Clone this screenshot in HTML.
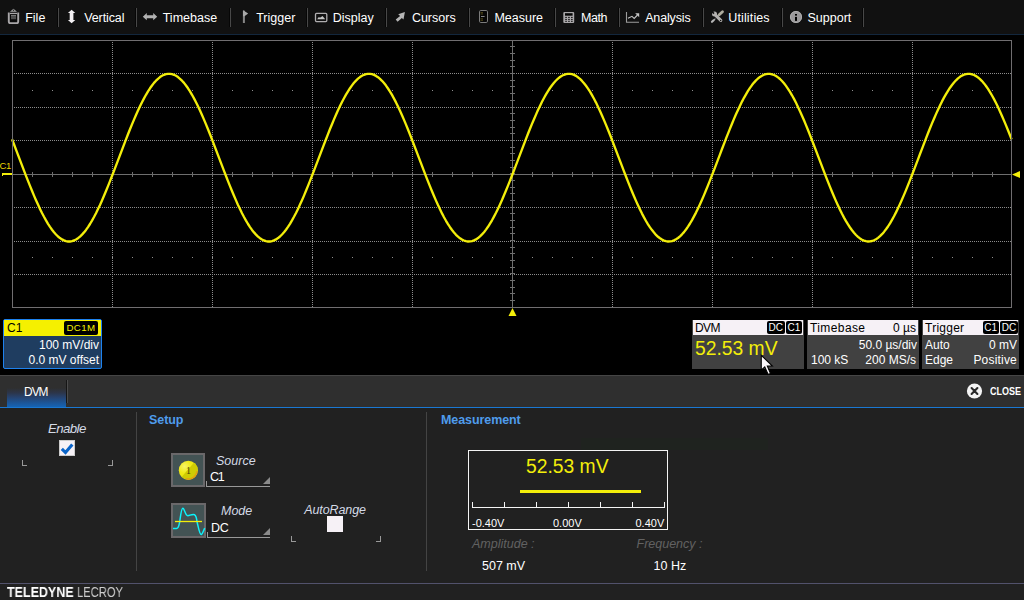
<!DOCTYPE html>
<html lang="en"><head><meta charset="utf-8"><title>DVM</title>
<style>
html,body{margin:0;padding:0}
body{width:1024px;height:600px;background:#000;position:relative;overflow:hidden;font-family:"Liberation Sans",sans-serif;color:#fff}
.t{position:absolute;white-space:nowrap;line-height:1}
.b{position:absolute}
.mi{font-size:12.5px;color:#fff}
.sep{position:absolute;top:8px;width:1px;height:19px;background:#484848}
.badge{position:absolute;background:#000;border-radius:2px;font-size:10px;text-align:center;line-height:13px;height:13px}
.it{font-style:italic}
.hd{font-weight:bold;color:#4f9cec;font-size:12.5px;letter-spacing:-0.080px}
</style></head><body>

<div class="b" style="left:0;top:0;width:1024px;height:34px;background:#111"></div>
<div class="b" style="left:0;top:34px;width:1024px;height:1px;background:#13273d"></div>
<div class="sep" style="left:57px;background:#060606"></div><div class="sep" style="left:58px"></div>
<div class="sep" style="left:135px;background:#060606"></div><div class="sep" style="left:136px"></div>
<div class="sep" style="left:229px;background:#060606"></div><div class="sep" style="left:230px"></div>
<div class="sep" style="left:306px;background:#060606"></div><div class="sep" style="left:307px"></div>
<div class="sep" style="left:385px;background:#060606"></div><div class="sep" style="left:386px"></div>
<div class="sep" style="left:468px;background:#060606"></div><div class="sep" style="left:469px"></div>
<div class="sep" style="left:554px;background:#060606"></div><div class="sep" style="left:555px"></div>
<div class="sep" style="left:618px;background:#060606"></div><div class="sep" style="left:619px"></div>
<div class="sep" style="left:702px;background:#060606"></div><div class="sep" style="left:703px"></div>
<div class="sep" style="left:781px;background:#060606"></div><div class="sep" style="left:782px"></div>
<div class="sep" style="left:862px;background:#060606"></div><div class="sep" style="left:863px"></div>
<span class="t mi" style="left:25.2px;top:11.5px;letter-spacing:0px">File</span>
<span class="t mi" style="left:84.2px;top:11.5px;letter-spacing:-0.1px">Vertical</span>
<span class="t mi" style="left:162.7px;top:11.5px;letter-spacing:0px">Timebase</span>
<span class="t mi" style="left:256.2px;top:11.5px;letter-spacing:0px">Trigger</span>
<span class="t mi" style="left:332.7px;top:11.5px;letter-spacing:0px">Display</span>
<span class="t mi" style="left:411.9px;top:11.5px;letter-spacing:0px">Cursors</span>
<span class="t mi" style="left:494.4px;top:11.5px;letter-spacing:0px">Measure</span>
<span class="t mi" style="left:581.0px;top:11.5px;letter-spacing:-0.45px">Math</span>
<span class="t mi" style="left:645.2px;top:11.5px;letter-spacing:-0.15px">Analysis</span>
<span class="t mi" style="left:728.3px;top:11.5px;letter-spacing:0.13px">Utilities</span>
<span class="t mi" style="left:807.5px;top:11.5px;letter-spacing:0px">Support</span>
<svg class="b" style="left:0;top:0" width="1024" height="34" viewBox="0 0 1024 34"><path d="M9.900 11.800L13.500 8.800L17 11.800z" fill="#a4a4a4"/><circle cx="13.500" cy="10.300" r="0.700" fill="#222"/><path d="M8.800 12.500V21.500Q8.800 23.100 10.400 23.100H16.600Q18.200 23.100 18.200 21.500V12.500" fill="#0a0a0a" stroke="#a8a6a8" stroke-width="1.900"/><rect x="10" y="12.800" width="7" height="1.300" fill="#a8a6a8"/><rect x="11" y="15" width="5" height="4.200" fill="#4c4c4c"/><rect x="11" y="15" width="5" height="0.900" fill="#7a7a7a"/><path d="M71.600 9.700L75.300 13.100H73.400V19.900H75.300L71.600 23.300L67.900 19.900H69.700V13.100H67.900z" fill="#f4f1f4"/><path d="M142.800 16.700L146.800 13V15.300H153.200V13L157.200 16.700L153.200 20.300V18.200H146.800V20.300z" fill="#b2b2b2"/><rect x="242.900" y="10.600" width="2" height="12.400" fill="#868686"/><path d="M243 10.300L248.200 13.400L244.500 16.200H243z" fill="#a8a8a8"/><rect x="315.500" y="13.400" width="11.300" height="8.200" rx="1" fill="none" stroke="#b0aeb0" stroke-width="1.300"/><path d="M317.200 19.300L318.500 17.300L320.300 17.600L322.500 16L324 17.800L325.200 19.300z" fill="#c4c4c4"/><path d="M404.900 12L398.200 14.300L400.100 16L395.700 19.600L397.600 21.800L401.900 17.900L403.500 19.400z" fill="#b6b6b6"/><rect x="479.500" y="10.500" width="8" height="12" rx="1.300" fill="#050505" stroke="#7c7c7c" stroke-width="1"/><path d="M480.500 12.600h2.500M480.500 14h2.500M480.500 18.800h2.500M480.500 20.300h2.500" stroke="#6a6020" stroke-width="0.700"/><path d="M481 16.500h3.600" stroke="#a8a8a8" stroke-width="0.800"/><rect x="563.300" y="12" width="10.900" height="11" rx="1" fill="#a9a7a9"/><rect x="565" y="13.200" width="7.600" height="2.500" fill="#050505"/><rect x="565.2" y="16.9" width="1.700" height="1" fill="#111"/><rect x="565.2" y="18.9" width="1.700" height="1" fill="#111"/><rect x="565.2" y="20.8" width="1.700" height="1" fill="#111"/><rect x="568.1" y="16.9" width="1.700" height="1" fill="#111"/><rect x="568.1" y="18.9" width="1.700" height="1" fill="#111"/><rect x="568.1" y="20.8" width="1.700" height="1" fill="#111"/><rect x="571" y="16.9" width="1.700" height="1" fill="#111"/><rect x="571" y="18.9" width="1.700" height="1" fill="#111"/><rect x="571" y="20.8" width="1.700" height="1" fill="#111"/><path d="M626.500 12V22.300H639" fill="none" stroke="#9c9c9c" stroke-width="1.100"/><path d="M628 18.300L632 16.300L634.200 18.400L637.500 15" fill="none" stroke="#c4c4c4" stroke-width="1.100"/><path d="M635.200 13.300H639.200V17.300z" fill="#c4c4c4"/><path d="M722.500 11.700L719.200 14.800" stroke="#aeac9e" stroke-width="2.800" stroke-linecap="round"/><path d="M715.400 18.700L713.400 20.600" stroke="#b0b0b0" stroke-width="1.100"/><path d="M713.600 20.300L712 21.800" stroke="#b6b6b6" stroke-width="2.200" stroke-linecap="round"/><path d="M716 15.600L720.800 20.400" stroke="#b4b2b0" stroke-width="3.100" stroke-linecap="round"/><circle cx="714.500" cy="14.100" r="2.500" fill="#b4b2b0"/><path d="M714 13.600L711 10.600" stroke="#111" stroke-width="1.600"/><circle cx="720.600" cy="20.400" r="0.750" fill="#111"/><circle cx="796" cy="17" r="6" fill="#9a989a"/><circle cx="796" cy="17" r="5.600" fill="none" stroke="#b4b4b4" stroke-width="0.800"/><rect x="795" y="14" width="2" height="1.600" fill="#000"/><rect x="795" y="16.900" width="2" height="4" fill="#000"/></svg>
<svg class="b" style="left:0;top:35px" width="1024" height="290" viewBox="0 35 1024 290">
<line x1="14" x2="1011" y1="73.5" y2="73.5" stroke="#8c8c8c" stroke-width="1" stroke-dasharray="1 1" shape-rendering="crispEdges"/>
<line x1="14" x2="1011" y1="107.5" y2="107.5" stroke="#8c8c8c" stroke-width="1" stroke-dasharray="1 1" shape-rendering="crispEdges"/>
<line x1="14" x2="1011" y1="140.5" y2="140.5" stroke="#8c8c8c" stroke-width="1" stroke-dasharray="1 1" shape-rendering="crispEdges"/>
<line x1="14" x2="1011" y1="207.5" y2="207.5" stroke="#8c8c8c" stroke-width="1" stroke-dasharray="1 1" shape-rendering="crispEdges"/>
<line x1="14" x2="1011" y1="241.5" y2="241.5" stroke="#8c8c8c" stroke-width="1" stroke-dasharray="1 1" shape-rendering="crispEdges"/>
<line x1="14" x2="1011" y1="274.5" y2="274.5" stroke="#8c8c8c" stroke-width="1" stroke-dasharray="1 1" shape-rendering="crispEdges"/>
<line y1="42" y2="307" x1="112.5" x2="112.5" stroke="#8c8c8c" stroke-width="1" stroke-dasharray="1 1" shape-rendering="crispEdges"/>
<line y1="42" y2="307" x1="212.5" x2="212.5" stroke="#8c8c8c" stroke-width="1" stroke-dasharray="1 1" shape-rendering="crispEdges"/>
<line y1="42" y2="307" x1="312.5" x2="312.5" stroke="#8c8c8c" stroke-width="1" stroke-dasharray="1 1" shape-rendering="crispEdges"/>
<line y1="42" y2="307" x1="412.5" x2="412.5" stroke="#8c8c8c" stroke-width="1" stroke-dasharray="1 1" shape-rendering="crispEdges"/>
<line y1="42" y2="307" x1="612.5" x2="612.5" stroke="#8c8c8c" stroke-width="1" stroke-dasharray="1 1" shape-rendering="crispEdges"/>
<line y1="42" y2="307" x1="712.5" x2="712.5" stroke="#8c8c8c" stroke-width="1" stroke-dasharray="1 1" shape-rendering="crispEdges"/>
<line y1="42" y2="307" x1="812.5" x2="812.5" stroke="#8c8c8c" stroke-width="1" stroke-dasharray="1 1" shape-rendering="crispEdges"/>
<line y1="42" y2="307" x1="912.5" x2="912.5" stroke="#8c8c8c" stroke-width="1" stroke-dasharray="1 1" shape-rendering="crispEdges"/>
<path d="M32 90.5h1M52 90.5h1M72 90.5h1M92 90.5h1M112 90.5h1M132 90.5h1M152 90.5h1M172 90.5h1M192 90.5h1M212 90.5h1M232 90.5h1M252 90.5h1M272 90.5h1M292 90.5h1M312 90.5h1M332 90.5h1M352 90.5h1M372 90.5h1M392 90.5h1M412 90.5h1M432 90.5h1M452 90.5h1M472 90.5h1M492 90.5h1M512 90.5h1M532 90.5h1M552 90.5h1M572 90.5h1M592 90.5h1M612 90.5h1M632 90.5h1M652 90.5h1M672 90.5h1M692 90.5h1M712 90.5h1M732 90.5h1M752 90.5h1M772 90.5h1M792 90.5h1M812 90.5h1M832 90.5h1M852 90.5h1M872 90.5h1M892 90.5h1M912 90.5h1M932 90.5h1M952 90.5h1M972 90.5h1M992 90.5h1M32 257.5h1M52 257.5h1M72 257.5h1M92 257.5h1M112 257.5h1M132 257.5h1M152 257.5h1M172 257.5h1M192 257.5h1M212 257.5h1M232 257.5h1M252 257.5h1M272 257.5h1M292 257.5h1M312 257.5h1M332 257.5h1M352 257.5h1M372 257.5h1M392 257.5h1M412 257.5h1M432 257.5h1M452 257.5h1M472 257.5h1M492 257.5h1M512 257.5h1M532 257.5h1M552 257.5h1M572 257.5h1M592 257.5h1M612 257.5h1M632 257.5h1M652 257.5h1M672 257.5h1M692 257.5h1M712 257.5h1M732 257.5h1M752 257.5h1M772 257.5h1M792 257.5h1M812 257.5h1M832 257.5h1M852 257.5h1M872 257.5h1M892 257.5h1M912 257.5h1M932 257.5h1M952 257.5h1M972 257.5h1M992 257.5h1" stroke="#909090" stroke-width="1" shape-rendering="crispEdges"/>
<path d="M12 174.5H1012M512.5 40V308M32.5 172v5M52.5 172v5M72.5 172v5M92.5 172v5M112.5 172v5M132.5 172v5M152.5 172v5M172.5 172v5M192.5 172v5M212.5 172v5M232.5 172v5M252.5 172v5M272.5 172v5M292.5 172v5M312.5 172v5M332.5 172v5M352.5 172v5M372.5 172v5M392.5 172v5M412.5 172v5M432.5 172v5M452.5 172v5M472.5 172v5M492.5 172v5M512.5 172v5M532.5 172v5M552.5 172v5M572.5 172v5M592.5 172v5M612.5 172v5M632.5 172v5M652.5 172v5M672.5 172v5M692.5 172v5M712.5 172v5M732.5 172v5M752.5 172v5M772.5 172v5M792.5 172v5M812.5 172v5M832.5 172v5M852.5 172v5M872.5 172v5M892.5 172v5M912.5 172v5M932.5 172v5M952.5 172v5M972.5 172v5M992.5 172v5M510 46.5h5M510 53.5h5M510 60.5h5M510 66.5h5M510 73.5h5M510 80.5h5M510 86.5h5M510 93.5h5M510 100.5h5M510 107.5h5M510 113.5h5M510 120.5h5M510 127.5h5M510 133.5h5M510 140.5h5M510 147.5h5M510 153.5h5M510 160.5h5M510 167.5h5M510 173.5h5M510 180.5h5M510 187.5h5M510 193.5h5M510 200.5h5M510 207.5h5M510 213.5h5M510 220.5h5M510 227.5h5M510 233.5h5M510 240.5h5M510 247.5h5M510 253.5h5M510 260.5h5M510 267.5h5M510 273.5h5M510 280.5h5M510 287.5h5M510 293.5h5M510 300.5h5" stroke="#6e6e6e" stroke-width="1" fill="none" shape-rendering="crispEdges"/>
<polyline points="12,139.2 14,144.3 16,149.6 18,154.8 20,160.1 22,165.3 24,170.6 26,175.8 28,180.9 30,185.9 32,190.8 34,195.6 36,200.2 38,204.6 40,208.9 42,213.0 44,216.8 46,220.4 48,223.8 50,226.9 52,229.7 54,232.3 56,234.5 58,236.5 60,238.1 62,239.4 64,240.4 66,241.1 68,241.5 70,241.5 72,241.1 74,240.5 76,239.5 78,238.2 80,236.6 82,234.6 84,232.4 86,229.9 88,227.1 90,224.0 92,220.6 94,217.0 96,213.2 98,209.1 100,204.9 102,200.4 104,195.8 106,191.0 108,186.1 110,181.1 112,176.0 114,170.8 116,165.6 118,160.4 120,155.1 122,149.8 124,144.6 126,139.4 128,134.3 130,129.3 132,124.4 134,119.6 136,115.0 138,110.6 140,106.3 142,102.2 144,98.4 146,94.8 148,91.4 150,88.3 152,85.5 154,82.9 156,80.7 158,78.8 160,77.1 162,75.8 164,74.8 166,74.2 168,73.8 170,73.8 172,74.2 174,74.8 176,75.8 178,77.1 180,78.8 182,80.7 184,82.9 186,85.5 188,88.3 190,91.4 192,94.8 194,98.4 196,102.2 198,106.3 200,110.6 202,115.0 204,119.6 206,124.4 208,129.3 210,134.3 212,139.4 214,144.6 216,149.8 218,155.1 220,160.4 222,165.6 224,170.8 226,176.0 228,181.1 230,186.1 232,191.0 234,195.8 236,200.4 238,204.9 240,209.1 242,213.2 244,217.0 246,220.6 248,224.0 250,227.1 252,229.9 254,232.4 256,234.6 258,236.6 260,238.2 262,239.5 264,240.5 266,241.1 268,241.5 270,241.5 272,241.1 274,240.4 276,239.4 278,238.1 280,236.5 282,234.5 284,232.3 286,229.7 288,226.9 290,223.8 292,220.4 294,216.8 296,213.0 298,208.9 300,204.6 302,200.2 304,195.6 306,190.8 308,185.9 310,180.9 312,175.8 314,170.6 316,165.3 318,160.1 320,154.8 322,149.6 324,144.3 326,139.2 328,134.1 330,129.0 332,124.2 334,119.4 336,114.8 338,110.3 340,106.1 342,102.0 344,98.2 346,94.6 348,91.3 350,88.2 352,85.4 354,82.8 356,80.6 358,78.7 360,77.1 362,75.8 364,74.8 366,74.1 368,73.8 370,73.9 372,74.2 374,74.9 376,75.9 378,77.2 380,78.9 382,80.8 384,83.1 386,85.6 388,88.5 390,91.6 392,94.9 394,98.6 396,102.4 398,106.5 400,110.8 402,115.2 404,119.9 406,124.6 408,129.5 410,134.6 412,139.7 414,144.9 416,150.1 418,155.3 420,160.6 422,165.9 424,171.1 426,176.3 428,181.4 430,186.4 432,191.3 434,196.0 436,200.6 438,205.1 440,209.3 442,213.4 444,217.2 446,220.8 448,224.1 450,227.2 452,230.0 454,232.5 456,234.8 458,236.7 460,238.3 462,239.6 464,240.5 466,241.2 468,241.5 470,241.4 472,241.1 474,240.4 476,239.4 478,238.1 480,236.4 482,234.4 484,232.2 486,229.6 488,226.8 490,223.6 492,220.3 494,216.6 496,212.8 498,208.7 500,204.4 502,200.0 504,195.3 506,190.5 508,185.6 510,180.6 512,175.5 514,170.3 516,165.1 518,159.8 520,154.6 522,149.3 524,144.1 526,138.9 528,133.8 530,128.8 532,123.9 534,119.2 536,114.6 538,110.1 540,105.9 542,101.8 544,98.0 546,94.4 548,91.1 550,88.0 552,85.2 554,82.7 556,80.5 558,78.6 560,77.0 562,75.7 564,74.8 566,74.1 568,73.8 570,73.9 572,74.2 574,74.9 576,75.9 578,77.3 580,78.9 582,80.9 584,83.2 586,85.8 588,88.6 590,91.7 592,95.1 594,98.8 596,102.6 598,106.7 600,111.0 602,115.5 604,120.1 606,124.9 608,129.8 610,134.8 612,139.9 614,145.1 616,150.3 618,155.6 620,160.9 622,166.1 624,171.4 626,176.5 628,181.6 630,186.6 632,191.5 634,196.3 636,200.9 638,205.3 640,209.5 642,213.6 644,217.4 646,221.0 648,224.3 650,227.4 652,230.1 654,232.6 656,234.9 658,236.8 660,238.3 662,239.6 664,240.6 666,241.2 668,241.5 670,241.4 672,241.1 674,240.4 676,239.3 678,238.0 680,236.3 682,234.3 684,232.1 686,229.5 688,226.6 690,223.5 692,220.1 694,216.4 696,212.6 698,208.5 700,204.2 702,199.7 704,195.1 706,190.3 708,185.4 710,180.4 712,175.2 714,170.1 716,164.8 718,159.6 720,154.3 722,149.0 724,143.8 726,138.6 728,133.6 730,128.6 732,123.7 734,118.9 736,114.3 738,109.9 740,105.7 742,101.6 744,97.8 746,94.3 748,90.9 750,87.9 752,85.1 754,82.6 756,80.4 758,78.5 760,76.9 762,75.7 764,74.7 766,74.1 768,73.8 770,73.9 772,74.3 774,75.0 776,76.0 778,77.4 780,79.0 782,81.0 784,83.3 786,85.9 788,88.8 790,91.9 792,95.3 794,98.9 796,102.8 798,106.9 800,111.2 802,115.7 804,120.3 806,125.1 808,130.0 810,135.1 812,140.2 814,145.4 816,150.6 818,155.9 820,161.1 822,166.4 824,171.6 826,176.8 828,181.9 830,186.9 832,191.8 834,196.5 836,201.1 838,205.5 840,209.7 842,213.8 844,217.6 846,221.1 848,224.4 850,227.5 852,230.3 854,232.8 856,235.0 858,236.8 860,238.4 862,239.7 864,240.6 866,241.2 868,241.5 870,241.4 872,241.0 874,240.3 876,239.3 878,237.9 880,236.2 882,234.2 884,231.9 886,229.3 888,226.5 890,223.3 892,219.9 894,216.3 896,212.4 898,208.3 900,204.0 902,199.5 904,194.9 906,190.1 908,185.1 910,180.1 912,175.0 914,169.8 916,164.6 918,159.3 920,154.0 922,148.8 924,143.6 926,138.4 928,133.3 930,128.3 932,123.4 934,118.7 936,114.1 938,109.7 940,105.5 942,101.4 944,97.6 946,94.1 948,90.8 950,87.7 952,85.0 954,82.5 956,80.3 958,78.4 960,76.8 962,75.6 964,74.7 966,74.1 968,73.8 970,73.9 972,74.3 974,75.0 976,76.1 978,77.4 980,79.1 982,81.1 984,83.4 986,86.0 988,88.9 990,92.1 992,95.5 994,99.1 996,103.0 998,107.1 1000,111.4 1002,115.9 1004,120.6 1006,125.4 1008,130.3 1010,135.3 1011.6,139.4" fill="none" stroke="#f3ee0a" stroke-width="2.35" stroke-linejoin="round"/>
<rect x="12.5" y="40.5" width="999" height="267" fill="none" stroke="#706e70" stroke-width="1" shape-rendering="crispEdges"/>
<path d="M1012 174.5l8-3.500v7z" fill="#f3ee0a"/>
<path d="M512.5 308l4 8h-8z" fill="#f3ee0a"/>
<path d="M2 173h10v1.800h-8.600v1.200h-1.400z" fill="#f3ee0a" shape-rendering="crispEdges"/>
</svg>
<span class="t" style="left:-0.500px;top:161.300px;font-size:9.500px;letter-spacing:-0.300px;color:#ecd400">C1</span>
<div class="b" style="left:3px;top:319px;width:99px;height:50px;background:#1f3d60;border:1px solid #1e82ee;border-radius:2px;box-sizing:border-box"></div>
<div class="b" style="left:4px;top:320px;width:97px;height:16px;background:#f5f000"></div>
<span class="t" style="left:7px;top:322px;font-size:12px;color:#000">C1</span>
<div class="badge" style="left:64px;top:321.200px;width:34px;height:13.400px;line-height:13.400px;color:#f5f000;font-size:9.700px;letter-spacing:0.450px">DC1M</div>
<span class="t" style="right:925px;top:339px;font-size:12px;color:#fff">100 mV/div</span>
<span class="t" style="right:925px;top:354px;font-size:12px;color:#fff">0.0 mV offset</span>
<div class="b" style="left:692px;top:320px;width:112px;height:49px;background:#414141"></div>
<div class="b" style="left:693px;top:320px;width:110px;height:15px;background:#f6f1f6"></div>
<span class="t" style="left:695px;top:322px;font-size:12px;color:#000;letter-spacing:-0.6px">DVM</span>
<div class="b" style="left:807px;top:320px;width:112px;height:49px;background:#414141"></div>
<div class="b" style="left:808px;top:320px;width:110px;height:15px;background:#f6f1f6"></div>
<span class="t" style="left:810px;top:322px;font-size:12px;color:#000;letter-spacing:0.4px">Timebase</span>
<div class="b" style="left:922px;top:320px;width:97px;height:49px;background:#414141"></div>
<div class="b" style="left:923px;top:320px;width:95px;height:15px;background:#f6f1f6"></div>
<span class="t" style="left:925px;top:322px;font-size:12px;color:#000;letter-spacing:0.25px">Trigger</span>
<div class="badge" style="left:767px;top:321px;width:17.5px;color:#fff">DC</div>
<div class="badge" style="left:786px;top:321px;width:16px;color:#fff">C1</div>
<span class="t" style="left:695px;top:338.800px;font-size:19.3px;color:#f3ee0a">52.53 mV</span>
<span class="t" style="right:108px;top:322px;font-size:12px;color:#000">0 µs</span>
<span class="t" style="right:107px;top:339px;font-size:12px;color:#fff">50.0 µs/div</span>
<span class="t" style="left:811px;top:354px;font-size:12px;color:#fff">100 kS</span>
<span class="t" style="right:108px;top:354px;font-size:12px;color:#fff">200 MS/s</span>
<div class="badge" style="left:983px;top:321px;width:15.5px;color:#fff">C1</div>
<div class="badge" style="left:1000px;top:321px;width:18px;color:#fff">DC</div>
<span class="t" style="left:925px;top:339px;font-size:12px;color:#fff">Auto</span>
<span class="t" style="right:7px;top:339px;font-size:12px;color:#fff">0 mV</span>
<span class="t" style="left:925px;top:354px;font-size:12px;color:#fff">Edge</span>
<span class="t" style="right:7px;top:354px;font-size:12px;letter-spacing:0.200px;color:#fff">Positive</span>
<div class="b" style="left:0;top:375px;width:1024px;height:1px;background:#454545"></div>
<div class="b" style="left:0;top:376px;width:1024px;height:31px;background:#2f2f2f"></div>
<div class="b" style="left:7px;top:388px;width:59px;height:19px;background:linear-gradient(#2f2f2f,#2c3549 25%,#264370 50%,#1d5494 75%,#1564b6)"></div>
<div class="b" style="left:66px;top:380px;width:1px;height:23px;background:#151515"></div><div class="b" style="left:67px;top:380px;width:1px;height:23px;background:#4c4c4c"></div>
<div class="b" style="left:0;top:407px;width:1024px;height:1px;background:#1a78d2"></div>
<div class="b" style="left:0;top:408px;width:1024px;height:175px;background:#212121"></div>
<span class="t" style="left:24.300px;top:385.500px;font-size:12.500px;letter-spacing:-1px;color:#fff;transform:scaleX(0.950);transform-origin:0 0">DVM</span>
<svg class="b" style="left:966px;top:383px" width="17" height="17" viewBox="0 0 17 17"><circle cx="8.5" cy="8" r="7.6" fill="#f4f4f4"/><path d="M5.600 5.100l5.800 5.800M11.400 5.100l-5.800 5.800" stroke="#2a2a2a" stroke-width="2.100" stroke-linecap="round"/></svg>
<span class="t" style="left:990px;top:385.5px;font-size:11px;font-weight:bold;color:#fff;transform:scaleX(0.82);transform-origin:0 0">CLOSE</span>
<div class="b" style="left:136px;top:412px;width:1px;height:159px;background:#444"></div>
<div class="b" style="left:426px;top:412px;width:1px;height:159px;background:#444"></div>
<span class="t it" style="left:48px;top:422px;font-size:13.300px;letter-spacing:-0.620px;color:#d4dae6">Enable</span>
<div class="b" style="left:59px;top:440px;width:16px;height:16px;background:#f6f1f6;box-sizing:border-box;border:1px solid #ccc"></div>
<svg class="b" style="left:59px;top:440px" width="16" height="16" viewBox="0 0 16 16"><path d="M2.800 8.800l3.700 3.700 6.800-7.900" fill="none" stroke="#0a64c8" stroke-width="3.100"/></svg>
<svg class="b" style="left:0;top:0" width="1024" height="600" viewBox="0 0 1024 600"><path d="M22.5 460V465.5H27M112.5 460V465.5H108" fill="none" stroke="#999" stroke-width="1" shape-rendering="crispEdges"/></svg>
<span class="t hd" style="left:149px;top:413.700px">Setup</span>
<span class="t hd" style="left:441px;top:413.700px">Measurement</span>
<div class="b" style="left:171px;top:453px;width:34px;height:34px;background:#435354;border:2px solid #6a686a;box-sizing:border-box"></div>
<svg class="b" style="left:171px;top:453px" width="34" height="34" viewBox="0 0 34 34"><defs><radialGradient id="rg" cx="0.3" cy="0.3" r="0.75"><stop offset="0" stop-color="#f8f468"/><stop offset="0.45" stop-color="#f0ea18"/><stop offset="1" stop-color="#e6e008"/></radialGradient><clipPath id="bc"><circle cx="17.300" cy="17.300" r="9.500"/></clipPath></defs><circle cx="17.300" cy="17.300" r="9.500" fill="url(#rg)"/><g clip-path="url(#bc)"><path d="M24 8.500L11 23.500L16 30L30 30L30 8z" fill="#cfcb04"/><circle cx="17.300" cy="17.300" r="9" fill="none" stroke="#e49c14" stroke-width="1.900" stroke-dasharray="16 100" transform="rotate(5 17.300 17.300)"/></g><text x="17.500" y="20.700" font-family="Liberation Serif,serif" font-size="10" fill="#4a4608" text-anchor="middle">1</text></svg>
<span class="t it" style="left:216px;top:455px;font-size:12.5px;color:#d4dae6">Source</span>
<span class="t" style="left:210px;top:470.800px;font-size:12.500px;letter-spacing:-1.200px;color:#fff">C1</span>
<svg class="b" style="left:0;top:0" width="1024" height="600" viewBox="0 0 1024 600"><path d="M206.5 481V486.5H270" fill="none" stroke="#999" stroke-width="1" shape-rendering="crispEdges"/><path d="M270 477V484H263z" fill="#8a8a8a"/></svg>
<div class="b" style="left:171px;top:503px;width:35px;height:35px;background:#435354;border:2px solid #6a686a;box-sizing:border-box"></div>
<svg class="b" style="left:171px;top:503px" width="35" height="35" viewBox="0 0 35 35"><path d="M2 25.500H5.500C7.500 25.500 8 22.500 8.600 19.500C9.600 13 10.200 5.300 11.900 5.300C13.500 5.300 14.200 12.700 16.800 12.700C18.800 12.700 19.500 11.400 22.500 11.400C25.800 11.400 25.300 16 26.200 19.500C27.200 23.500 28.500 31.600 30.300 31.600C31.300 31.600 32.300 28 33.700 25.200" fill="none" stroke="#0cf2fa" stroke-width="1.500"/><path d="M4 18.500h27" stroke="#f3ee0a" stroke-width="1.3"/></svg>
<span class="t it" style="left:221px;top:505px;font-size:12.5px;color:#d4dae6">Mode</span>
<span class="t" style="left:211px;top:521.800px;font-size:12.500px;letter-spacing:-0.400px;color:#fff">DC</span>
<svg class="b" style="left:0;top:0" width="1024" height="600" viewBox="0 0 1024 600"><path d="M207.5 532V537.5H270" fill="none" stroke="#999" stroke-width="1" shape-rendering="crispEdges"/><path d="M270 528V535H263z" fill="#8a8a8a"/></svg>
<span class="t it" style="left:304.200px;top:503.500px;font-size:12.5px;letter-spacing:-0.1px;color:#d4dae6">AutoRange</span>
<div class="b" style="left:327px;top:516px;width:16px;height:16px;background:#f6f1f6"></div>
<svg class="b" style="left:0;top:0" width="1024" height="600" viewBox="0 0 1024 600"><path d="M291.5 536V541.5H296M380.5 536V541.5H376" fill="none" stroke="#999" stroke-width="1" shape-rendering="crispEdges"/></svg>
<div class="b" style="left:581px;top:438px;width:187px;height:12px;background:#1f231f"></div>
<div class="b" style="left:468px;top:450px;width:200px;height:80px;border:1px solid #f4f4f4;box-sizing:border-box"></div>
<span class="t" style="left:526px;top:456.800px;font-size:19.3px;color:#f3ee0a">52.53 mV</span>
<div class="b" style="left:520px;top:490px;width:121px;height:3px;background:#f3ee0a"></div>
<svg class="b" style="left:0;top:0" width="1024" height="600" viewBox="0 0 1024 600"><path d="M472 507.500H665M472.5 502v5M504.5 502v5M536.5 502v5M568.5 502v5M600.5 502v5M632.5 502v5M664.5 502v5" fill="none" stroke="#f4f4f4" stroke-width="1" shape-rendering="crispEdges"/></svg>
<span class="t" style="left:472px;top:517.500px;font-size:11px;color:#fff">-0.40V</span>
<span class="t" style="left:553px;top:517.500px;font-size:11px;color:#fff">0.00V</span>
<span class="t" style="left:635.500px;top:517.500px;font-size:11px;color:#fff">0.40V</span>
<span class="t it" style="left:472px;top:537.500px;font-size:12.5px;color:#626262">Amplitude :</span>
<span class="t it" style="left:636.500px;top:537.500px;font-size:12.5px;color:#626262">Frequency :</span>
<span class="t" style="left:482px;top:560.200px;font-size:12.500px;color:#fff">507 mV</span>
<span class="t" style="left:653.500px;top:560.200px;font-size:12.500px;color:#fff">10 Hz</span>
<div class="b" style="left:0;top:583px;width:1024px;height:1px;background:#52526c"></div>
<div class="b" style="left:0;top:584px;width:1024px;height:16px;background:#212121"></div>
<span class="t" style="left:7px;top:584.800px;font-size:14.5px;font-weight:bold;color:#fff;transform:scaleX(0.861);transform-origin:0 0;will-change:transform">TELEDYNE</span>
<span class="t" style="left:76.800px;top:584.800px;font-size:14.5px;color:#ccc;transform:scaleX(0.77);transform-origin:0 0;will-change:transform">LECROY</span>
<svg class="b" style="left:759.600px;top:354.100px" width="14.840" height="23.320" viewBox="0 0 14 22"><path d="M1.200 1.200V15.200L4.500 12.100L7.700 19.400L9.900 18.400L6.900 11.400H11.700Z" fill="#fbf8fb" stroke="#000" stroke-width="1" stroke-linejoin="miter"/></svg>
</body></html>
